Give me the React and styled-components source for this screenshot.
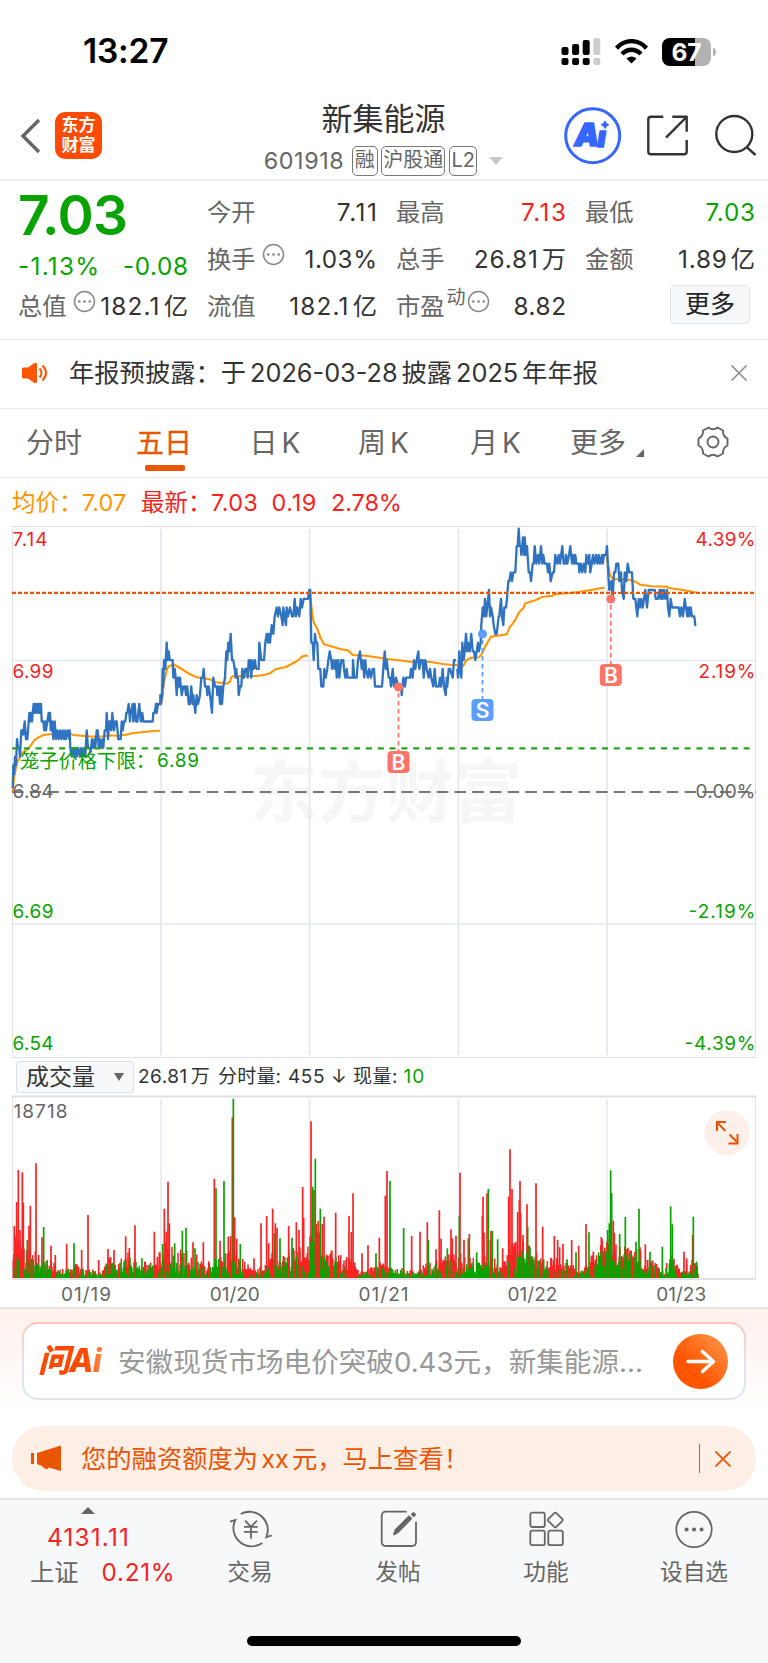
import React from "react";
import styled, { createGlobalStyle } from "styled-components";

const RED = "#f62323";
const GREEN = "#08a300";
const ORANGE = "#ea5504";
const AMBER = "#ff9500";
const BLUE = "#2f73c0";

const Global = createGlobalStyle`
  * { box-sizing: border-box; }
  body { margin: 0; background: #fff; }
  body, text { font-family: Inter, "Noto Sans CJK SC", sans-serif; }
`;

const Page = styled.main`
  width: 768px;
  height: 1663px;
  overflow: hidden;
  display: flex;
  flex-direction: column;
  color: #333;
  line-height: 1;
  white-space: nowrap;
`;

const Text = styled.span`
  color: ${(p) => p.$color || "inherit"};
  font-size: ${(p) => p.$size || 24}px;
  font-weight: ${(p) => p.$weight || 400};
  letter-spacing: ${(p) => p.$track || 0}px;
  word-spacing: ${(p) => p.$word || 0}px;
  margin-right: ${(p) => -(p.$track || 0)}px;
  line-height: 1;
`;
const Unit = styled.span`
  margin-left: 3px;
  letter-spacing: 0;
  padding-right: ${(p) => p.$track || 0}px;
`;

/* ---------- status bar ---------- */
const StatusBar = styled.div`
  height: 96px;
  flex: none;
  display: flex;
  align-items: center;
  justify-content: space-between;
  padding: 8px 52px 0 83px;
`;
const StatusIcons = styled.div`
  display: flex;
  align-items: center;
  gap: 14px;
`;

function Signal() {
  const heights = [8, 11, 15];
  return (
    <svg width="40" height="28" viewBox="0 0 40 28">
      {heights.map((h, i) => (
        <g key={h}>
          <rect x={0.5 + i * 10.6} y={17 - h} width="7" height={h} rx="2" />
          <rect x={0.5 + i * 10.6} y="20" width="7" height="7" rx="2" />
        </g>
      ))}
      <rect x="32.3" y="0" width="7" height="17" rx="2" fill="#ccc" />
      <rect x="32.3" y="20" width="7" height="7" rx="2" fill="#ccc" />
    </svg>
  );
}
function Wifi() {
  return (
    <svg width="33" height="26" viewBox="0 0 33 26" fill="none" stroke="#000" strokeWidth="4.4">
      <path d="M1.500 9.200C10-.2 23-.2 31.500 9.200" />
      <path d="M7 15c5.600-5.700 13.400-5.700 19 0" />
      <path d="M11.500 19.500q5-4 10 0L16.500 24.500z" fill="#000" stroke="none" />
    </svg>
  );
}
function Battery() {
  return (
    <svg width="54" height="28" viewBox="0 0 54 28">
      <defs>
        <clipPath id="cell"><rect width="49" height="28" rx="8" /></clipPath>
      </defs>
      <g clipPath="url(#cell)">
        <rect width="49" height="28" fill="#b2b2b2" />
        <rect width="33" height="28" />
      </g>
      <path d="M51 9.500q3 1.500 3 4.500t-3 4.500z" fill="#b2b2b2" />
      <text x="24.500" y="22.700" fill="#fff" fontSize="24.500" fontWeight="700" textAnchor="middle">67</text>
    </svg>
  );
}

/* ---------- header ---------- */
const Header = styled.header`
  height: 85px;
  flex: none;
  display: grid;
  grid-template-columns: 230px 1fr 230px;
  border-bottom: 2px solid #ededed;
`;
const HeaderLeft = styled.div`
  display: flex;
  align-items: flex-start;
  padding: 16px 0 0 20px;
  gap: 14px;
  svg { margin-top: 6px; }
`;
const BrandMark = styled.div`
  width: 47px;
  height: 47px;
  border-radius: 10px;
  background: #ff4a00;
  color: #fff;
  font-size: 17px;
  font-weight: 700;
  line-height: 19.500px;
  text-align: center;
  padding-top: 4px;
`;
const HeaderTitle = styled.div`
  display: flex;
  flex-direction: column;
  align-items: center;
  padding: 7px 1px 0 0;
`;
const CodeRow = styled.div`
  display: flex;
  align-items: center;
  height: 32px;
  margin-top: 10.500px;
  color: #666;
`;
const Tag = styled.span`
  width: ${(p) => p.$w}px;
  height: 30px;
  margin-left: ${(p) => p.$ml || 5}px;
  border: 1.500px solid #777;
  border-radius: 5px;
  font-size: 20px;
  line-height: 27px;
  text-align: center;
`;
const Caret = styled.i`
  border: ${(p) => p.$w}px solid transparent;
  border-top: ${(p) => p.$h}px solid ${(p) => p.$color};
  border-bottom: 0;
  margin-left: ${(p) => p.$ml || 0}px;
`;
const HeaderActions = styled.div`
  display: flex;
  align-items: flex-start;
  padding: 11px 0 0 26px;
`;

/* ---------- quote ---------- */
const Quote = styled.section`
  height: 159px;
  flex: none;
  display: grid;
  grid-template-columns: 170px 170px 170px 170px;
  column-gap: 19px;
  padding: 7px 0 0 18px;
  border-bottom: 1px solid #eaeaea;
`;
const QuoteCol = styled.div`
  display: flex;
  flex-direction: column;
`;
const Cell = styled.div`
  height: 47.300px;
  flex: none;
  display: flex;
  align-items: center;
  justify-content: space-between;
  color: ${(p) => p.$color || "#333"};
`;
const Price = styled.div`
  height: 53px;
  padding-top: 1px;
  font-size: 55px;
  font-weight: 600;
  line-height: 53px;
  color: ${GREEN};
  letter-spacing: -0.700px;
`;
const ChangeRow = styled(Cell)`
  height: 41.600px;
  padding-top: 9px;
`;
const Label = styled.span`
  display: flex;
  align-items: flex-start;
  font-size: 24.300px;
  color: #666;
  gap: ${(p) => p.$gap || 6}px;
  svg { margin-top: -4px; }
  sup { font-size: 19px; line-height: 19px; margin: -6px -5px 0 -4px; }
`;
const MoreButton = styled.button`
  width: 80px;
  height: 39px;
  margin: -3px 5px 0 auto;
  padding: 0;
  border: 1.500px solid #dfe2e8;
  border-radius: 5px;
  background: #f7f8fa;
  color: #222;
  font: 25px/35px Inter, "Noto Sans CJK SC", sans-serif;
`;
const Dots = () => (
  <svg width="23" height="23" viewBox="0 0 23 23" fill="none" stroke="#888" strokeWidth="1.500">
    <circle cx="11.500" cy="11.500" r="10" />
    <path d="M6.200 11.500h.1M11.500 11.500h.1M16.700 11.500h.1" strokeWidth="2.600" strokeLinecap="round" />
  </svg>
);
const Num = ({ children, unit, track, color }) => (
  <Text $size={24.3} $track={track} $color={color}>
    {children}
    {unit && <Unit $track={track}>{unit}</Unit>}
  </Text>
);

/* ---------- notice ---------- */
const Notice = styled.section`
  height: 69px;
  flex: none;
  display: flex;
  align-items: center;
  padding: 0 21px 2px 22px;
  border-bottom: 1px solid #eaeaea;
`;
const Grow = styled.div`
  flex: 1;
  margin-left: ${(p) => p.$ml}px;
  padding-top: ${(p) => p.$top || 0}px;
`;
const Cross = ({ size, color, w = 1.5 }) => (
  <svg width={size} height={size} viewBox="0 0 16 16" stroke={color} strokeWidth={w}>
    <path d="M.5.5l15 15M15.500.5l-15 15" />
  </svg>
);

/* ---------- tabs ---------- */
const Tabs = styled.nav`
  height: 69px;
  flex: none;
  display: flex;
  padding-left: 26px;
  border-bottom: 1px solid #eaeaea;
`;
const Tab = styled.div`
  width: ${(p) => p.$w}px;
  display: flex;
  flex-direction: column;
  padding-top: ${(p) => p.$top || 20}px;
  font-size: 28px;
  line-height: 28px;
  word-spacing: -4px;
  color: ${(p) => (p.$active ? ORANGE : "#666")};
  -webkit-text-stroke: ${(p) => (p.$active ? 0.3 : 0)}px ${ORANGE};
`;
const Underline = styled.i`
  width: 40px;
  height: 6px;
  margin: 8px 0 0 9px;
  border-radius: 2px;
  background: ${ORANGE};
`;
const MoreTab = styled.div`
  display: flex;
  align-items: flex-end;
  gap: 10px;
`;
const Legend = styled.div`
  height: 47px;
  flex: none;
  display: flex;
  align-items: center;
  padding: 2px 0 0 12px;
`;
const LegendItem = styled.span`
  width: ${(p) => p.$w}px;
  font-size: ${(p) => p.$size || 23.5}px;
  line-height: 24px;
  letter-spacing: ${(p) => p.$track || 0}px;
  color: ${(p) => p.$color};
`;

/* ---------- charts ---------- */
const ChartSvg = styled.svg`
  display: block;
  flex: none;
`;
const PLOT = { left: 12.5, right: 755.5, days: [161, 309.5, 458.5, 607] };
const UNIT = 1 / 3;

/* Each run lists "slot:ticks above 6.84"; the origin is the slot of the run's first column. */
const PRICE_RUNS = [
  { origin: 0, d: "38:0.4 40:3 42:2 45:4 48:3 51:6 54:5 58:5 60:4 64:7 68:7 70:6.5 74:8 78:6 82:6 86:8 88:9 90:8 94:9 96:8 98:9 101:10 104:9 106:10 110:9 112:10 116:9 118:10 121:9 123:10 125:8 130:8 133:7 136:8 138:7 142:8 146:9 149:8 150:9 152:7 155:7 157:8 160:6 164:8 168:6 172:7 176:6 180:7 184:6 188:7 192:6 196:7 198:6 204:7 208:6 209:7 211:5 215:4 220:5 224:4 227:5 230:4 235:5 240:4 244:5 248:4 252:5 256:4 260:7 264:5 270:5 272:4.5 276:6 280:5 284:6 286:5 290:7 293:7 296:5 300:6 303:5 308:6 310:5 314:7 318:7 320:9 324:6 328:8 330:8 334:7 337:9 342:7 346:8 350:8 355:6 362:6 365:8 368:7 372:8 376:8 379:9 382:9 386:10 390:8 392:9 398:10 400:8 404:10 408:8 412:8 418:10 422:8 427:9 430:8 458:8 460:9 464:9 468:10 470:9 474:10 481:10 481:11 483:10 486:11 488:14 490:12 492:15 496:14 500:17 503:15 506:16 509:15 518:15 520:13 524:14 527:13 530:11 534:13 537:12 540:13 545:11 550:12 555:12 558:11 562:12 566:10 570:10 574:12 578:10 580:11 586:9 590:11 594:10 600:11 604:13 608:13 611:14 615:12 620:12 622:11 626:12 630:11 636:9 640:13 645:12 650:12 652:11 656:12 660:10 663:12 666:10 670:12 675:13 679:16 682:15 685:17 688:16 692:18 696:15 700:15 704:14 707:13 709:14 711:13 714:13 716:11 720:12 724:12 727:14 732:13 736:14 740:14 743:13 746:15 750:15 754:13 757:15 761:14 765:15 768:14" },
  { origin: 768, d: "0:14 8:14 10:17 16:15 24:15 28:17 32:18 36:17 38:18 42:17 47:19 52:18 56:20 62:21 66:20 70:21 76:20 80:19 82:21 86:20 90:19 92:21 96:20 102:21 108:20 112:20 116:22 120:20 124:21 130:20 134:22 138:21 143:22 156:22 160:23 163:23 166:17 170:17 173:15 177:18 180:17 184:17 187:14 193:14 196:12 202:12 205:14 209:13 214:14 217:15 221:16 226:15 228:14 232:15 236:14 240:15 242:13 247:15 250:13 256:15 262:15 264:14 268:13 272:14 275:13 290:13 291:15 295:13 302:13 306:15 312:16 317:14 320:15 325:13 328:15 330:14 336:13 340:14 345:13 350:14 354:14 357:12 378:12 382:14 386:16 390:14 392:15 398:13 402:13 405:12 410:14 414:12 420:13 427:12 436:12 437:11 442:13 447:12 450:13 462:13 465:14 470:13 474:15 478:14 482:15 487:16 490:14 495:15 500:15 503:13 508:15 512:14 518:13 522:14 526:13 532:12 536:14 540:12 548:12 552:13 555:12 558:13 560:14 564:12 569:11 572:13 574:12 578:14 582:14 590:13 594:15 600:15" },
  { origin: 768, d: "604:14 606:13 610:16 612:14 616:13 619:17 623:15 626:16 630:18 634:16 636:17 641:16 646:18 650:16 654:16 658:15 662:16 666:17 669:16 674:17 676:19 680:21 684:20 687:22 691:20 699:23 702:20 705:21 710:20 713:19 718:18 722:18 725:19 728:20 730:20 735:22 738:20 742:19 745:21 750:21 753:22 757:24 760:24 764:25 768:24 772:25 778:25 782:28 785:28 788:30 791:28 794:28 796:27 801:29 804:27 806:29 810:27 813:28 818:25 822:25 825:24 830:26 833:26 836:28 841:26 846:27 850:26 855:28 859:26 862:27 866:26 873:26 876:25 880:26 884:24 890:25 894:25 898:27 904:26 908:27 912:26 919:28 923:26 928:26 930:27 934:26 939:27 943:28 948:26 951:27 955:26 958:27 961:26 968:26 970:25 974:26 979:25 983:26 988:25 991:27 996:26 1000:27 1003:25 1007:26 1011:27 1015:26 1020:27 1024:26 1028:27 1032:26 1038:27 1040:26 1044:27 1050:27 1053:28 1058:24 1060:23 1066:24 1070:22 1074:25 1078:25 1081:26 1087:26 1090:24 1095:25 1098:23 1103:22 1106:25 1111:24 1115:26 1120:25 1128:25 1132:22 1138:22 1144:20 1148:22 1152:21 1156:22 1160:21 1164:22 1168:23 1173:21 1178:23 1196:23 1199:22 1206:22 1211:23 1214:22 1217:23 1220:22 1224:23 1228:22 1233:23 1236:21 1240:20 1244:22 1248:21 1255:21 1268:21 1272:20 1276:21 1281:20 1286:22 1290:21 1294:20 1297:21 1300:20 1304:21 1308:20 1315:20 1318:19 1321:19" },
];
const AVG_RUNS = [
  { origin: 0, d: "38,830 42,790 50,745 65,715 80,705 92,692 104,674 118,666 130,660 150,658 210,656 220,660 245,662 285,665 312,664 330,661 350,662 378,659 400,654 440,650 460,648 480,647" },
  { origin: 0, d: "484,565 488,540 491,505 496,485 502,460 508,453 522,449 535,456 550,465 570,478 590,487 610,490 630,493 642,501 660,503 680,506 690,500 694,487 700,483 768,483 788,481 810,475 828,462 858,456 886,441 898,433 906,425 914,422 924,422" },
  { origin: 768, d: "160,228 164,255 168,290 173,322 184,342 194,370 204,388 230,395 255,403 275,406 290,420 330,422 360,427 400,433 430,436 470,441 520,440 560,447 590,450 604,450" },
  { origin: 768, d: "612,450 622,452 632,435 645,428 670,427 680,412 690,390 705,365 725,362 752,358 762,335 768,328 778,315 786,298 793,288 802,280 808,265 838,256 858,246 888,242 903,237 943,234 968,231 1008,224 1033,220 1046,218" },
  { origin: 768, d: "1051,115 1056,150 1062,180 1072,193 1108,193 1123,195 1138,200 1153,209 1188,214 1233,215 1243,220 1278,224 1298,228 1313,232 1321,232" },
];
const tickY = (t) => 266.7 - 8.77 * t;
const runPoints = (run, sep, toY) =>
  run.d.split(" ").map((p) => {
    const [x, v] = p.split(sep).map(Number);
    return `${((x + run.origin) * UNIT).toFixed(1)},${toY(v).toFixed(1)}`;
  }).join(" ");

function Marker({ x, y, boxY, letter, color }) {
  return (
    <g>
      <path d={`M${x} ${y + 6}V${boxY}`} stroke={color} strokeWidth="1.800" strokeDasharray="4.500 3.500" />
      <circle cx={x} cy={y} r="4.500" fill={color} />
      <rect x={x - 11} y={boxY} width="22" height="22" rx="4" fill={color} />
      <text x={x} y={boxY + 18.5} fill="#fff" fontSize="21" fontWeight="600" textAnchor="middle">{letter}</text>
    </g>
  );
}

function PriceChart() {
  const labels = [
    [20.5, "7.14", 35, "4.39%", 60, RED],
    [153, "6.99", 41, "2.19%", 57, RED],
    [273, "6.84", 41, "0.00%", 60, "#666"],
    [392.5, "6.69", 41, "-2.19%", 67, GREEN],
    [524.5, "6.54", 41, "-4.39%", 71, GREEN],
  ];
  return (
    <ChartSvg width="768" height="533" viewBox="0 0 768 533" fill="none">
      <text x="386" y="292" fill="#f6f6f6" fontSize="68" fontWeight="700" textAnchor="middle">东方财富</text>
      <path d={PLOT.days.map((x) => `M${x} 4V530`).join("")} stroke="#e4e8f0" strokeWidth="1.800" />
      <path d="M12 135.500H756M12 399H756" stroke="#e4e8f0" strokeWidth="1.500" />
      <path d="M12.500 1.500H755.500V532.500H12.500z" stroke="#dfe1e6" />
      <path d="M12 267H756" stroke="#777" strokeWidth="2.200" strokeDasharray="11.500 6.200" />
      {AVG_RUNS.map((r, i) => (
        <polyline key={i} points={runPoints(r, ",", (v) => v * UNIT - 10)} stroke={AMBER} strokeWidth="2.100" />
      ))}
      {PRICE_RUNS.map((r, i) => (
        <polyline key={i} points={runPoints(r, ":", tickY)} stroke={BLUE} strokeWidth="2.300" strokeLinejoin="round" />
      ))}
      <path d="M12 67.800H756" stroke={ORANGE} strokeWidth="2.200" strokeDasharray="4 2" />
      <path d="M12 223.300H752" stroke="#22a41c" strokeWidth="2.200" strokeDasharray="6 5.800" />
      {labels.map(([y, l, lw, r, rw, c]) => (
        <g key={l} fill={c} fontSize="19">
          <text x="12.500" y={y} textLength={lw}>{l}</text>
          <text x={755.5 - rw} y={y} textLength={rw}>{r}</text>
        </g>
      ))}
      <text x="20" y="242.500" fill={GREEN} fontSize="19.300">笼子价格下限：</text>
      <text x="157" y="242" fill={GREEN} fontSize="19" textLength="42">6.89</text>
      <Marker x={398.5} y={162} boxY={226} letter="B" color="#ff7468" />
      <Marker x={482.5} y={109} boxY={174} letter="S" color="#5a9eff" />
      <Marker x={610.8} y={74} boxY={139} letter="B" color="#ff7468" />
    </ChartSvg>
  );
}

const VolumeBar = styled.div`
  height: 37px;
  flex: none;
  display: flex;
  align-items: center;
  padding: 1px 0 0 16px;
`;
const Select = styled.div`
  width: 118px;
  height: 32px;
  margin-right: 4px;
  display: flex;
  align-items: center;
  justify-content: space-between;
  padding: 0 9px 0 9px;
  border: 1px solid #dcdfe6;
  border-radius: 3px;
  background: #f7f8fa;
  font-size: 23px;
`;

const SPIKES =
  "43,528,r 50,456,r 55,360,r 60,540,r 67,367,r 70,458,r 82,570,g 87,527,r 91,467,r 108,340,r 126,562,r 131,531,g 153,587,r 166,615,r 200,581,r 222,580,g 245,600,r 264,495,r 296,630,r 324,597,r 342,600,r 377,559,r 388,594,r 405,526,r 426,625,g 463,545,r 478,607,r 488,582,g 493,476,r 499,545,r 504,395,r 508,520,r 524,580,g 547,542,g 558,533,g 579,577,r 585,595,g 610,577,r 643,387,r 648,415,g 660,572,r 672,393,g 685,560,r 692,558,r 697,202,r 700,146,g 704,502,r 710,566,r 721,582,g 762,625,r 783,520,r 800,498,r 806,580,r 818,476,r 823,550,g 826,520,r 831,533,r 840,565,g 866,528,r 876,563,g 889,517,r 897,540,r 908,411,r 911,503,r 933,214,r 938,410,g 942,420,r 946,326,g 955,513,r 961,476,g 967,522,r 972,500,r 1007,488,r 1047,498,r 1054,546,r 1059,430,r 1086,610,r 1104,586,r 1128,610,g 1138,563,r 1156,437,r 1161,363,r 1170,393,g 1211,534,g 1235,558,r 1260,545,r 1282,517,r 1285,570,g 1308,598,r 1318,481,r 1323,566,r 1342,595,g 1353,538,r 1357,565,r 1368,557,r 1378,497,g 1380,368,r 1392,570,r 1405,565,g 1408,552,r 1430,607,g 1447,497,r 1449,440,r 1452,548,r 1461,430,r 1465,417,g 1471,570,r 1473,543,r 1477,543,g 1493,568,g 1508,595,r 1526,440,r 1530,298,r 1536,417,r 1545,580,r 1553,486,r 1558,450,r 1560,393,r 1562,490,r 1569,555,r 1581,463,r 1583,530,g 1590,592,g 1608,400,r 1628,530,r 1631,628,g 1663,558,r 1673,570,r 1679,592,r 1689,582,r 1701,628,g 1715,570,r 1728,607,g 1736,587,r 1758,522,r 1767,547,g 1780,605,r 1804,561,r 1807,573,r 1823,540,g 1828,520,g 1832,361,g 1835,430,g 1840,512,r 1843,548,r 1859,552,g 1876,501,g 1890,610,g 1908,575,g 1917,476,g 1920,592,r 1936,583,r 1950,605,g 1987,590,g 2012,469,g 2017,523,g 2052,605,r 2060,625,r 2078,555,r 2080,500,g 2090,635,g"
    .split(" ").map((s) => s.split(","));

/* [slot, typical height, share of red] along the five sessions */
const ACTIVITY = [
  [38, 110, 0.5], [75, 90, 0.6], [105, 65, 0.5], [150, 50, 0.4], [175, 28, 0.5], [230, 34, 0.5], [290, 26, 0.5], [310, 18, 0.4],
  [325, 65, 0.8], [345, 45, 0.5], [385, 75, 0.6], [410, 50, 0.4], [425, 40, 0.3], [470, 48, 0.8], [495, 90, 0.6], [530, 70, 0.3],
  [585, 65, 0.4], [620, 40, 0.7], [650, 65, 0.4], [680, 70, 0.6], [715, 60, 0.6], [740, 34, 0.9], [775, 24, 0.3], [810, 65, 0.6],
  [860, 70, 0.6], [920, 90, 0.7], [945, 150, 0.5], [975, 80, 0.7], [1020, 60, 0.6], [1060, 45, 0.7], [1080, 14, 0.4], [1125, 30, 0.6],
  [1150, 45, 0.7], [1175, 35, 0.4], [1225, 20, 0.5], [1280, 35, 0.4], [1320, 50, 0.6], [1380, 70, 0.6], [1430, 60, 0.5], [1480, 50, 0.6],
  [1510, 50, 0.6], [1540, 95, 0.8], [1590, 85, 0.5], [1630, 45, 0.6], [1660, 55, 0.8], [1715, 35, 0.9], [1740, 18, 0.4], [1780, 60, 0.6],
  [1825, 120, 0.4], [1860, 75, 0.6], [1910, 75, 0.4], [1960, 45, 0.6], [1990, 20, 0.5], [2015, 70, 0.3], [2030, 35, 0.5], [2045, 22, 0.4],
  [2085, 55, 0.5], [2097, 14, 0.5],
];
function activityAt(slot) {
  let i = 1;
  while (i < ACTIVITY.length - 1 && ACTIVITY[i][0] < slot) i += 1;
  const [x0, h0, r0] = ACTIVITY[i - 1];
  const [x1, h1, r1] = ACTIVITY[i];
  const k = Math.min(1, (slot - x0) / (x1 - x0));
  return [h0 + (h1 - h0) * k, r0 + (r1 - r0) * k];
}
function volumePaths() {
  let seed = 77;
  const rand = () => {
    seed = (seed * 16807) % 2147483647;
    return seed / 2147483647;
  };
  const out = { r: "", g: "" };
  for (let s = 40; s < 2096; s += 2) {
    const [h, red] = activityAt(s);
    const isRed = rand() < red;
    const height = h * (isRed ? 0.4 + 0.85 * rand() : 0.15 + 0.8 * rand() ** 1.3);
    out[isRed ? "r" : "g"] += `M${(s * UNIT).toFixed(1)} 183v-${(height * UNIT).toFixed(1)}`;
  }
  return out;
}
const BASE = volumePaths();
const DATES = ["01/19", "01/20", "01/21", "01/22", "01/23"];

function VolumeChart() {
  return (
    <ChartSvg width="768" height="212" viewBox="0 0 768 212" fill="none">
      <path d={PLOT.days.map((x) => `M${x} 4V182`).join("")} stroke="#e4e8f0" strokeWidth="1.600" />
      <path d="M12 1.500H756M12 184H756" stroke="#dfe1e6" strokeWidth="1.800" />
      <path d="M12.500 1V184M755.500 1V184" stroke="#dfe1e6" />
      <path d={BASE.r} stroke="#fa2323" strokeWidth="1.500" />
      {SPIKES.map(([x, y, c]) => (
        <path key={x} d={`M${(x * UNIT).toFixed(2)} 183V${(y * UNIT - 45).toFixed(1)}`} stroke={c === "r" ? "#fa2323" : GREEN} strokeWidth="1.700" />
      ))}
      <path d={BASE.g} stroke={GREEN} strokeWidth="1.500" />
      <text x="13.500" y="23" fill="#666" fontSize="19" textLength="54">18718</text>
      {DATES.map((d, i) => (
        <text key={d} x={61 + i * 148.8} y="206" fill="#666" fontSize="19" textLength="50">{d}</text>
      ))}
      <circle cx="727" cy="37.700" r="22.500" fill="#fdf0ea" />
      <path d="M725.500 36l-8.500-8.500M717 36v-9h9M729.500 39.500l8 8M737.500 39v9.500H728.500" stroke={ORANGE} strokeWidth="2" />
    </ChartSvg>
  );
}

/* ---------- ask AI ---------- */
const AskSection = styled.section`
  height: 119px;
  flex: none;
  padding: 13px 22px 0;
  border-top: 2px solid #e8e4e3;
  background: linear-gradient(#fff1ec, #fff 90%);
`;
const AskBox = styled.div`
  height: 78px;
  display: flex;
  align-items: center;
  padding: 0 16px 0 14px;
  border: 2px solid transparent;
  border-radius: 16px;
  background: linear-gradient(#fff, #fff) padding-box,
    linear-gradient(#ffc3b8, #e6dfea 50%, #dbe6f7) border-box;
`;
const AskLogo = styled.b`
  width: 80px;
  font-size: 32px;
  font-style: italic;
  font-weight: 800;
  letter-spacing: -1px;
  line-height: 34px;
  background: linear-gradient(90deg, #fc4a00 60%, #ff8b50 80%);
  background-clip: text;
  color: transparent;
`;

/* ---------- banner ---------- */
const Banner = styled.section`
  height: 65px;
  flex: none;
  margin: 0 12px 7px;
  padding: 0 25px 0 19px;
  display: flex;
  align-items: center;
  border-radius: 32px;
  background: #fdeee6;
  color: ${ORANGE};
`;
const Divider = styled.i`
  width: 1.500px;
  height: 29px;
  margin-right: 15px;
  background: ${ORANGE};
`;

/* ---------- bottom bar ---------- */
const BottomBar = styled.footer`
  flex: 1;
  position: relative;
  border-top: 2px solid #e4e4e4;
  background: #f7f8fa;
  display: grid;
  grid-template-columns: 176px 148px 148px 148px 148px;
`;
const IndexTile = styled.div`
  display: flex;
  flex-direction: column;
  align-items: center;
  padding-top: 7px;
  gap: 11px;
`;
const UpCaret = styled.i`
  border: 7px solid transparent;
  border-bottom: 7px solid #666;
  border-top: 0;
`;
const IndexRow = styled.div`
  display: flex;
  align-self: flex-start;
  align-items: center;
  gap: 23px;
  margin-left: 30px;
  color: #666;
`;
const NavItem = styled.div`
  display: flex;
  flex-direction: column;
  align-items: center;
  padding-top: 8px;
  gap: 10px;
  font-size: 22.700px;
  line-height: 24px;
  color: #666;
`;
const NavIcon = styled.svg.attrs({ width: 44, height: 42, viewBox: "0 0 44 42", fill: "none", stroke: "#666", strokeWidth: 1.8 })``;
const HomeIndicator = styled.div`
  position: absolute;
  left: 247px;
  bottom: 17px;
  width: 274px;
  height: 10px;
  border-radius: 5px;
  background: #000;
`;

export default function App() {
  return (
    <Page>
      <Global />
      <StatusBar>
        <Text $size={33.5} $weight={600} $color="#000" $track={-0.2}>13:27</Text>
        <StatusIcons><Signal /><Wifi /><Battery /></StatusIcons>
      </StatusBar>

      <Header>
        <HeaderLeft>
          <svg width="21" height="36" viewBox="0 0 21 36" fill="none" stroke="#666" strokeWidth="3.500">
            <path d="M19 2L3 18l16 16" />
          </svg>
          <BrandMark>东方<br />财富</BrandMark>
        </HeaderLeft>
        <HeaderTitle>
          <Text $size={31}>新集能源</Text>
          <CodeRow>
            <Text $size={23.3} $track={0.6}>601918</Text>
            <Tag $w={26} $ml={8}>融</Tag>
            <Tag $w={64} $ml={3.5}>沪股通</Tag>
            <Tag $w={28} $ml={4}>L2</Tag>
            <Caret $w={7} $h={8} $ml={12} $color="#c8c8c8" />
          </CodeRow>
        </HeaderTitle>
        <HeaderActions>
          <svg width="204" height="58" viewBox="0 0 204 58" fill="none" stroke="#333" strokeWidth="2.400" strokeLinejoin="round">
            <circle cx="28.700" cy="28.700" r="27" stroke="#3766ff" strokeWidth="3" />
            <g fill="#3766ff" stroke="#3766ff" strokeWidth="1.600" fontWeight="900" fontStyle="italic">
              <text x="10.500" y="39" fontSize="31">A</text>
              <text x="33.500" y="40" fontSize="28">ı</text>
            </g>
            <path d="M41 13.200q1.200 3.500 4.500 4.500q-3.300 1-4.500 4.500q-1.200-3.500-4.500-4.500q3.300-1 4.500-4.500z" fill="#3766ff" stroke="none" />
            <path d="M99.300 9.700H87q-2.700 0-2.700 2.700V44.600q0 2.700 2.700 2.700H120q2.700 0 2.700-2.700V33M108.300 9.700h14.400V24.700M122 10.500L102 30.700" />
            <circle cx="170.300" cy="27" r="18" /><path d="M183 40.300l8.500 7.700" />
          </svg>
        </HeaderActions>
      </Header>

      <Quote>
        <QuoteCol>
          <Price>7.03</Price>
          <ChangeRow $color={GREEN}><Num track={1.3}>-1.13%</Num><Num track={0.6}>-0.08</Num></ChangeRow>
          <Cell><Label>总值<Dots /></Label><Num track={1.2} unit="亿">182.1</Num></Cell>
        </QuoteCol>
        <QuoteCol>
          <Cell><Label>今开</Label><Num track={1.6}>7.11</Num></Cell>
          <Cell><Label>换手<Dots /></Label><Num track={0.5}>1.03%</Num></Cell>
          <Cell><Label>流值</Label><Num track={1.2} unit="亿">182.1</Num></Cell>
        </QuoteCol>
        <QuoteCol>
          <Cell><Label>最高</Label><Num track={1.5} color={RED}>7.13</Num></Cell>
          <Cell><Label>总手</Label><Num track={0.9} unit="万">26.81</Num></Cell>
          <Cell><Label>市盈<sup>动</sup><Dots /></Label><Num track={0.6}>8.82</Num></Cell>
        </QuoteCol>
        <QuoteCol>
          <Cell><Label>最低</Label><Num track={0.7} color={GREEN}>7.03</Num></Cell>
          <Cell><Label>金额</Label><Num track={0.8} unit="亿">1.89</Num></Cell>
          <Cell><MoreButton>更多</MoreButton></Cell>
        </QuoteCol>
      </Quote>

      <Notice>
        <svg width="27" height="22" viewBox="0 0 27 22" fill="none" stroke="#ff5500" strokeWidth="2">
          <path d="M0 7q0-1.500 1.500-1.500H6L12.500 1q2.500-1 2.500 1.500v17q0 2.500-2.500 1.500L6 16.500H1.500Q0 16.500 0 15z" fill="#ff5500" stroke="none" />
          <path d="M17.500 6.500q4 4.500 0 9M20.500 3.500q7 7.500 0 15" />
        </svg>
        <Grow $ml={20}><Text $size={25.3} $word={-3.2}>年报预披露：于 2026-03-28 披露 2025 年年报</Text></Grow>
        <Cross size={16} color="#888" />
      </Notice>

      <Tabs>
        <Tab $w={110}>分时</Tab>
        <Tab $w={113.5} $active>五日<Underline /></Tab>
        <Tab $w={108.5}>日 K</Tab>
        <Tab $w={112}>周 K</Tab>
        <Tab $w={100}>月 K</Tab>
        <Tab $w={127}>
          <MoreTab>更多<svg width="8" height="8"><path d="M8 0v8H0z" fill="#666" /></svg></MoreTab>
        </Tab>
        <Tab $w={34} $top={17}>
          <svg width="32" height="32" viewBox="0 0 32 32" fill="none" stroke="#666" strokeWidth="1.900" strokeLinejoin="round">
            <path d="M11.500 1.500Q16 5 20.500 1.500L26 4.500Q25.500 10 30.500 12.500V19.500Q25.500 22 26 27.500L20.500 30.500Q16 27 11.500 30.500L6 27.500Q6.500 22 1.500 19.500V12.500Q6.500 10 6 4.500z" />
            <circle cx="16" cy="16" r="5.500" />
          </svg>
        </Tab>
      </Tabs>

      <Legend>
        <LegendItem $w={70} $color={AMBER}>均价：</LegendItem>
        <LegendItem $w={59} $color={AMBER}>7.07</LegendItem>
        <LegendItem $w={70} $color={RED}>最新：</LegendItem>
        <LegendItem $w={60.5} $color={RED} $track={0.3}>7.03</LegendItem>
        <LegendItem $w={59.5} $color={RED} $track={0.6}>0.19</LegendItem>
        <LegendItem $w={80} $color={RED} $track={-0.1}>2.78%</LegendItem>
      </Legend>

      <PriceChart />
      <VolumeBar>
        <Select>成交量<Caret $w={5} $h={8} $color="#666" /></Select>
        <LegendItem $size={19} $w={80} $track={0.5} $color="#333">26.81<Unit>万</Unit></LegendItem>
        <LegendItem $size={19} $w={70} $track={0.2} $color="#333">分时量:</LegendItem>
        <LegendItem $size={19} $w={43} $track={0.6} $color="#333">455</LegendItem>
        <LegendItem $size={19} $w={22} $color="#333">↓</LegendItem>
        <LegendItem $size={19} $w={50.5} $track={0.5} $color="#333">现量:</LegendItem>
        <LegendItem $size={19} $track={1} $color={GREEN}>10</LegendItem>
      </VolumeBar>
      <VolumeChart />

      <AskSection>
        <AskBox>
          <AskLogo>问Ai</AskLogo>
          <Grow $ml={0} $top={3}>
            <Text $size={27.6} $color="#999">安徽现货市场电价突破0.43元，新集能源...</Text>
          </Grow>
          <svg width="55" height="55" viewBox="0 0 55 55" fill="none">
            <defs>
              <linearGradient id="go" x1="0" y1="1" x2="1" y2="0">
                <stop offset=".35" stopColor="#ff5500" /><stop offset="1" stopColor="#ff9a50" />
              </linearGradient>
            </defs>
            <circle cx="27.500" cy="27.500" r="27.500" fill="url(#go)" />
            <path d="M15 27.500H40M29.500 17.500l11 10-11 10" stroke="#fff" strokeWidth="3.400" strokeLinecap="round" strokeLinejoin="round" />
          </svg>
        </AskBox>
      </AskSection>

      <Banner>
        <svg width="31" height="27" viewBox="0 0 31 27" fill={ORANGE}>
          <path d="M0 8h3v11H0zM6 8l24-7.500v25.500l-12-3.500q-3 4-7-1.500L6 19z" />
        </svg>
        <Grow $ml={19}><Text $size={25.3} $word={-4}>您的融资额度为 xx 元，马上查看！</Text></Grow>
        <Divider />
        <Cross size={16} color={ORANGE} w={1.8} />
      </Banner>

      <BottomBar>
        <IndexTile>
          <UpCaret />
          <Text $color={RED} $size={24.3} $track={1.2}>4131.11</Text>
          <IndexRow><Text $size={24.3}>上证</Text><Text $size={24.3} $color={RED} $track={0.7}>0.21%</Text></IndexRow>
        </IndexTile>
        <NavItem>
          <NavIcon>
            <path d="M12.700 6A18.300 18.300 0 0 1 38.300 29.300L43.700 27.300M34.300 35A18.300 18.300 0 0 1 7.300 12L2 13.700M17 12.700l6 6 6-6M16 18.800h13.700M16 23.800h13.700M23 18.500v12.200" />
          </NavIcon>
          交易
        </NavItem>
        <NavItem>
          <NavIcon>
            <path d="M30.700 3.700H10q-4.300 0-4.300 4.300V33.700q0 4.300 4.300 4.300H35.700q4.300 0 4.300-4.300V13.700" />
            <path d="M18 26.500l1.500-4.500L33 8.500l2.200 2.200L21.500 24.500zM36 6.500l1.500-1.500 1.700 1.700-1.500 1.500z" fill="#666" strokeLinejoin="round" />
          </NavIcon>
          发帖
        </NavItem>
        <NavItem>
          <NavIcon>
            <rect x="6.300" y="4.700" width="14.500" height="14.300" rx="2" /><rect x="6.300" y="22.700" width="14.500" height="14.500" rx="2" />
            <rect x="24.300" y="22.700" width="14.500" height="14.500" rx="2" /><rect x="25.700" y="6.400" width="11.200" height="11.200" rx="1.500" transform="rotate(45 31.300 12)" />
          </NavIcon>
          功能
        </NavItem>
        <NavItem>
          <NavIcon>
            <circle cx="22" cy="21.500" r="17.700" /><path d="M14.500 21.500h.1M22 21.500h.1M29.500 21.500h.1" strokeWidth="4" strokeLinecap="round" />
          </NavIcon>
          设自选
        </NavItem>
        <HomeIndicator />
      </BottomBar>
    </Page>
  );
}
